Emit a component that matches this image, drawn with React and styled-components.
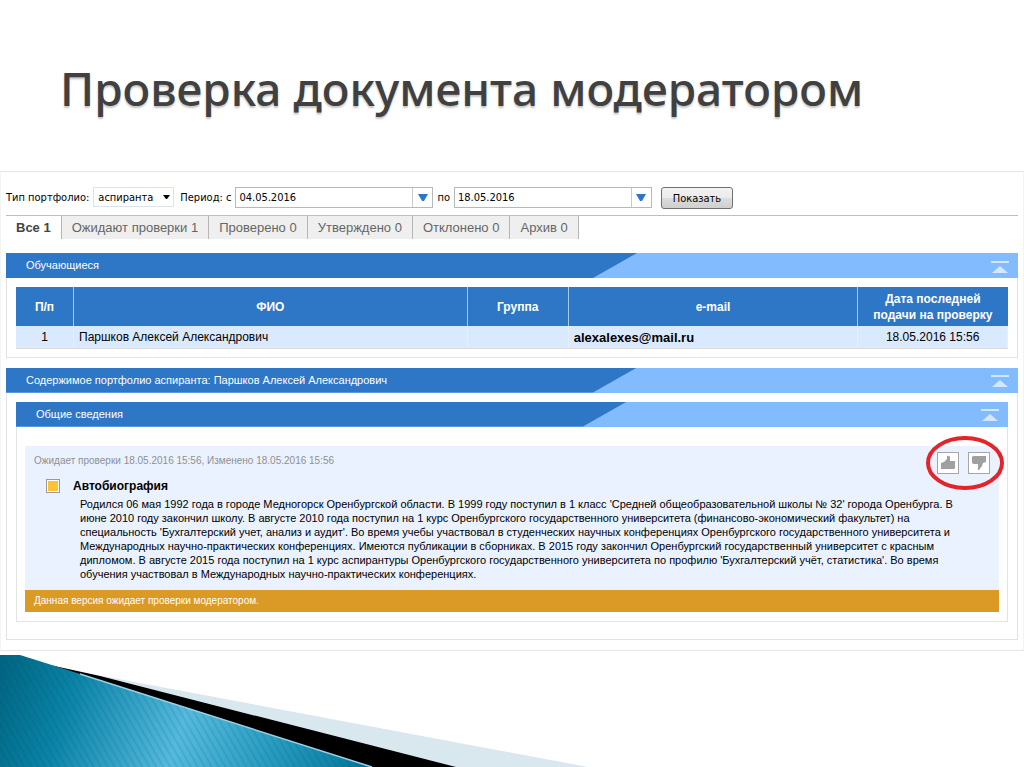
import React from 'react'
import styled, { createGlobalStyle } from 'styled-components'

const tabs = [
  { name: 'Все', count: 1, active: true },
  { name: 'Ожидают проверки', count: 1 },
  { name: 'Проверено', count: 0 },
  { name: 'Утверждено', count: 0 },
  { name: 'Отклонено', count: 0 },
  { name: 'Архив', count: 0 },
]

const students = [
  { id: 1, name: 'Паршков Алексей Александрович', group: '', email: 'alexalexes@mail.ru', date: '18.05.2016 15:56' },
]

const biography = [
  "Родился 06 мая 1992 года в городе Медногорск Оренбургской области. В 1999 году поступил в 1 класс 'Средней общеобразовательной школы № 32' города Оренбурга. В",
  'июне 2010 году закончил школу. В августе 2010 года поступил на 1 курс Оренбургского государственного университета (финансово-экономический факультет) на',
  "специальность 'Бухгалтерский учет, анализ и аудит'. Во время учебы участвовал в студенческих научных конференциях Оренбургского государственного университета и",
  'Международных научно-практических конференциях. Имеются публикации в сборниках. В 2015 году закончил Оренбургский государственный университет с красным',
  "дипломом. В августе 2015 года поступил на 1 курс аспирантуры Оренбургского государственного университета по профилю 'Бухгалтерский учёт, статистика'. Во время",
  'обучения участвовал в Международных научно-практических конференциях.',
]

function Panel({ title, inner, children }) {
  return (
    <PanelBox>
      <PanelHead>
        <PanelTitle>{title}</PanelTitle>
        <PanelSide>
          <CollapseButton aria-label="Свернуть">
            <svg width="18" height="12" viewBox="0 0 18 12" fill="#d3e8ff">
              <rect width="18" height="2" />
              <path d="M9 5 L17 12 H1 Z" />
            </svg>
          </CollapseButton>
        </PanelSide>
      </PanelHead>
      <PanelBody $inner={inner}>{children}</PanelBody>
    </PanelBox>
  )
}

function DateField({ id, value }) {
  return (
    <DateBox>
      <DateInput id={id} type="text" defaultValue={value} />
      <DateButton aria-label="Выбрать дату">
        <svg width="10" height="7" viewBox="0 0 10 7" fill="#2e76c6">
          <path d="M0 0 H10 L6 7 H4 Z" />
        </svg>
      </DateButton>
    </DateBox>
  )
}

function Filters() {
  return (
    <Toolbar>
      <label htmlFor="type">Тип портфолио:</label>
      <SelectBox>
        <Select id="type" defaultValue="asp">
          <option value="asp">аспиранта</option>
          <option value="stud">студента</option>
        </Select>
        <SelectArrow width="7" height="4" viewBox="0 0 7 4">
          <path d="M0 0 H7 L4 4 H3 Z" />
        </SelectArrow>
      </SelectBox>
      <label htmlFor="from">Период: с</label>
      <DateField id="from" value="04.05.2016" />
      <label htmlFor="to">по</label>
      <DateField id="to" value="18.05.2016" />
      <ShowButton>Показать</ShowButton>
    </Toolbar>
  )
}

function Students() {
  return (
    <Table>
      <colgroup>
        <Col $width="5.8%" />
        <Col $width="39.7%" />
        <Col $width="10.2%" />
        <Col $width="29.2%" />
        <Col $width="auto" />
      </colgroup>
      <thead>
        <tr>
          <Th>П/п</Th>
          <Th>ФИО</Th>
          <Th>Группа</Th>
          <Th>e-mail</Th>
          <Th>Дата последней подачи на проверку</Th>
        </tr>
      </thead>
      <tbody>
        {students.map((s) => (
          <tr key={s.id}>
            <Td $center>{s.id}</Td>
            <Td>{s.name}</Td>
            <Td>{s.group}</Td>
            <Td $bold>{s.email}</Td>
            <Td $center>{s.date}</Td>
          </tr>
        ))}
      </tbody>
    </Table>
  )
}

function Document() {
  return (
    <>
      <Card>
        <CardTop>
          <Status>Ожидает проверки 18.05.2016 15:56, Изменено 18.05.2016 15:56</Status>
          <Votes>
            <VoteButton aria-label="Утвердить">
              <svg width="18" height="18" viewBox="0 0 18 18" fill="#a0a0a0">
                <path d="M2 9 L5 8 L8 5 V2 Q10 1 11 3 V7 H15 Q17 7 16 9 V14 Q16 15 14 15 H2 Z" />
              </svg>
            </VoteButton>
            <VoteButton aria-label="Отклонить">
              <svg width="18" height="18" viewBox="0 0 18 18" fill="#a0a0a0">
                <path d="M2 3 Q2 2 4 2 H16 V8 L13 9 L12 12 L9 16 Q7 16 8 14 V10 H4 Q2 10 2 8 Z" />
              </svg>
            </VoteButton>
            <Highlight viewBox="0 0 80 56">
              <ellipse cx="40" cy="28" rx="37" ry="25" fill="none" stroke="#e3242b" strokeWidth="4" />
            </Highlight>
          </Votes>
        </CardTop>
        <Entry>
          <Marker />
          <div>
            <EntryTitle>Автобиография</EntryTitle>
            <EntryText>
              {biography.map((line) => (
                <span key={line}>{line} </span>
              ))}
            </EntryText>
          </div>
        </Entry>
      </Card>
      <Notice>Данная версия ожидает проверки модератором.</Notice>
    </>
  )
}

function Wave() {
  return (
    <WaveSvg width="588" height="113" viewBox="0 0 588 113">
      <defs>
        <linearGradient id="sea" x1="0" y1="0" x2="370" y2="130" gradientUnits="userSpaceOnUse">
          <stop offset="0" stopColor="#00637f" />
          <stop offset="0.2" stopColor="#0a83a6" />
          <stop offset="0.5" stopColor="#55badd" />
          <stop offset="0.75" stopColor="#259abd" />
          <stop offset="1" stopColor="#007394" />
        </linearGradient>
        <pattern id="lines" width="6" height="6" patternUnits="userSpaceOnUse" patternTransform="rotate(-30)">
          <rect width="2" height="6" fill="#004e6b" opacity="0.12" />
        </pattern>
      </defs>
      <path d="M60 14 L588 113 H440 Z" fill="#d8e8ee" />
      <path d="M50 11 L100 22 L456 113 H370 Z" fill="#000" />
      <path d="M0 1 H20 L55 12 L372 113 H0 Z" fill="url(#sea)" />
      <path d="M0 1 H20 L55 12 L372 113 H0 Z" fill="url(#lines)" />
      <path d="M80 20 L372 113" stroke="#9fd0e2" strokeWidth="1.5" />
    </WaveSvg>
  )
}

function App() {
  return (
    <Slide>
      <GlobalStyle />
      <Title>Проверка документа модератором</Title>
      <Screen>
        <Filters />
        <Tabs>
          {tabs.map((t) => (
            <Tab key={t.name} $active={t.active}>{t.name} {t.count}</Tab>
          ))}
        </Tabs>
        <Panel title="Обучающиеся">
          <Students />
        </Panel>
        <Panel title="Содержимое портфолио аспиранта: Паршков Алексей Александрович">
          <Panel inner title="Общие сведения">
            <Document />
          </Panel>
        </Panel>
      </Screen>
      <Wave />
    </Slide>
  )
}

export default App

const GlobalStyle = createGlobalStyle`
  * {
    box-sizing: border-box;
  }
  body {
    margin: 0;
    background: #fff;
    color: #000;
    font-family: "Liberation Sans", Arial, sans-serif;
    font-size: 12px;
  }
  button, input, select {
    font: inherit;
    color: inherit;
    border-radius: 0;
  }
`

const Slide = styled.div`
  min-height: 100vh;
  display: flex;
  flex-direction: column;
  overflow: hidden;
`

const Title = styled.h1`
  margin: 0;
  padding: 56px 60px 51px;
  font-family: "Noto Sans", "Open Sans", sans-serif;
  font-size: 46px;
  font-weight: 500;
  line-height: 64px;
  white-space: nowrap;
  color: #404040;
  text-shadow: 0 2px 2px #c4c4c4;
`

const Screen = styled.main`
  border: 1px solid #e6e6e6;
  border-left-color: #f4f4f4;
  border-right-color: #f4f4f4;
  padding: 14px 5px 10px;
`

const Toolbar = styled.div`
  display: flex;
  align-items: center;
  gap: 4px;
  height: 22px;
  font-family: "DejaVu Sans Condensed", Tahoma, sans-serif;
  font-size: 11px;
  white-space: nowrap;
`

const SelectBox = styled.div`
  position: relative;
  display: flex;
  margin-right: 2px;
`

const Select = styled.select`
  appearance: none;
  width: 81px;
  height: 20px;
  padding: 0 4px;
  border: 1px solid #dbe3ea;
  background: #fff;
`

const SelectArrow = styled.svg`
  position: absolute;
  right: 4px;
  top: 8px;
  pointer-events: none;
`

const DateBox = styled.div`
  display: flex;
  width: 198px;
  height: 21px;
  border: 1px solid #b5b8bc;
`

const DateInput = styled.input`
  flex: 1;
  min-width: 0;
  border: 0;
  padding: 0 3px;
`

const DateButton = styled.button`
  display: flex;
  align-items: center;
  justify-content: center;
  width: 20px;
  padding: 0;
  border: 0;
  border-left: 1px solid #c9c9c9;
  background: #fff;
`

const ShowButton = styled.button`
  width: 72px;
  height: 22px;
  margin: 2px 0 0 5px;
  padding: 0;
  border: 1px solid #707070;
  border-radius: 3px;
  background: linear-gradient(#f2f2f2 0%, #ebebeb 50%, #dddddd 50%, #cfcfcf 100%);
`

const Tabs = styled.nav`
  display: flex;
  margin: 7px 0 14px;
  border-top: 1px solid #bdbdbd;
`

const Tab = styled.button`
  height: 23px;
  padding: 0 10px;
  border: 0;
  border-right: 1px solid #b5b5b5;
  background: ${props => props.$active ? '#fff' : '#efefef'};
  color: ${props => props.$active ? '#444' : '#666'};
  font-size: 13px;
  font-weight: ${props => props.$active ? 'bold' : 'normal'};
`

const PanelBox = styled.section`
  & + & {
    margin-top: 10px;
  }
`

const PanelHead = styled.header`
  display: flex;
  height: 25px;
  background: #82bcff;
`

const PanelTitle = styled.h2`
  flex: 1;
  margin: 0;
  padding-left: 20px;
  background: #2e76c6;
  clip-path: polygon(0 0, 100% 0, calc(100% - 44px) 100%, 0 100%);
  color: #fff;
  font-size: 11px;
  font-weight: normal;
  line-height: 24px;
  white-space: nowrap;
`

const PanelSide = styled.div`
  display: flex;
  justify-content: flex-end;
  align-items: center;
  width: 381px;
  padding: 2px 9px 0 0;
`

const CollapseButton = styled.button`
  display: flex;
  padding: 0;
  border: 0;
  background: none;
`

const PanelBody = styled.div`
  border: 1px solid #e3e3e3;
  border-top: 0;
  padding: ${props => props.$inner ? '19px 8px 9px' : '9px 9px 8px'};

  & > section {
    margin-bottom: 9px;
  }
`

const Table = styled.table`
  width: 100%;
  table-layout: fixed;
  border-collapse: collapse;
`

const Col = styled.col`
  width: ${props => props.$width};
`

const Th = styled.th`
  height: 39px;
  padding: 1px 4px 0;
  border-right: 1px solid #a9c8ea;
  background: #2e76c6;
  color: #fff;
  font-size: 12px;
  line-height: 16px;

  &:last-child {
    border-right: 0;
  }
`

const Td = styled.td`
  height: 22px;
  padding: 1px 5px 0;
  border-right: 1px solid #e6eef6;
  border-bottom: 1px solid #dcdcdc;
  background: #d9eaff;
  font-size: ${props => props.$bold ? '13px' : '12px'};
  font-weight: ${props => props.$bold ? 'bold' : 'normal'};
  text-align: ${props => props.$center ? 'center' : 'left'};
`

const Card = styled.article`
  padding: 6px 9px 9px;
  background: #eaf2ff;
`

const CardTop = styled.div`
  display: flex;
  justify-content: space-between;
`

const Status = styled.div`
  padding-top: 2px;
  color: #909090;
  font-size: 10px;
  line-height: 14px;
`

const Votes = styled.div`
  position: relative;
  display: flex;
  gap: 9px;
`

const VoteButton = styled.button`
  display: flex;
  align-items: center;
  justify-content: center;
  width: 22px;
  height: 22px;
  padding: 0;
  border: 1px solid #a6a6a6;
  background: #fff;
`

const Highlight = styled.svg`
  position: absolute;
  left: -12px;
  top: -17px;
  width: 80px;
  height: 56px;
  pointer-events: none;
`

const Entry = styled.div`
  display: flex;
  gap: 13px;
  padding: 4px 0 0 12px;
`

const Marker = styled.span`
  flex: none;
  width: 14px;
  height: 14px;
  margin-top: 1px;
  border: 1px solid #9a9a9a;
  background: #ffc234;
  box-shadow: inset 0 0 0 1px #fff;
`

const EntryTitle = styled.h3`
  margin: 0;
  font-size: 12px;
  line-height: 16px;
`

const EntryText = styled.p`
  margin: 3px 0 0 7px;
  font-size: 11px;
  line-height: 14px;

  span {
    display: block;
  }
`

const Notice = styled.div`
  padding-left: 9px;
  background: #db9926;
  color: #fff;
  font-size: 10px;
  line-height: 22px;
`

const WaveSvg = styled.svg`
  display: block;
  margin-top: auto;
`
